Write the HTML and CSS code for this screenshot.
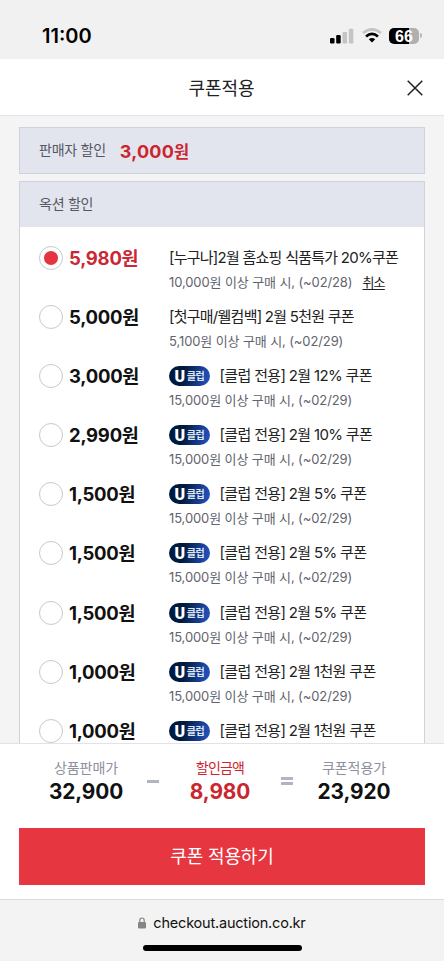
FILE: index.html
```html
<!DOCTYPE html>
<html lang="ko">
<head>
<meta charset="utf-8">
<meta name="viewport" content="width=device-width, initial-scale=1">
<title>쿠폰적용</title>
<link rel="stylesheet" href="styles.css">
</head>
<body>
<div class="screen">
  <div class="status">
    <span class="time">11:00</span>
    <div class="indicators">
      <svg class="signal" width="24" height="16" viewBox="0 0 24 16"><rect x="0" y="10" width="4.5" height="5.5" rx="1.2"/><rect x="6.2" y="7" width="4.5" height="8.5" rx="1.2"/><g fill="#c4c4c4"><rect x="12.5" y="4" width="4.5" height="11.5" rx="1.2"/><rect x="18.8" y="0.8" width="4.5" height="14.7" rx="1.2"/></g></svg>
      <svg class="wifi" width="20" height="15" viewBox="0 0 20 15"><path d="M1 5Q10-2.4 19 5" fill="none" stroke="#c4c4c4" stroke-width="2.7"/><path d="M4 8.4Q10 3.2 16 8.4" fill="none" stroke="#000" stroke-width="2.7"/><path d="M6.8 11.2Q10 8.6 13.2 11.2L10 14.5Z"/></svg>
      <div class="battery"><span class="level">66</span><span class="cap"></span></div>
    </div>
  </div>
  <header class="header">
    <h1>쿠폰적용</h1>
    <svg class="close" width="16" height="16" viewBox="0 0 16 16"><path d="M.7.7 15.3 15.3M15.3.7.7 15.3" fill="none" stroke="#222" stroke-width="1.5"/></svg>
  </header>
  <main class="content">
    <section class="seller"><span class="label">판매자 할인</span><strong>3,000<span class="won">원</span></strong></section>
    <section class="auction">
      <h2 class="label">옥션 할인</h2>
      <ul class="coupons">
        <li class="coupon selected"><i class="radio"></i><b class="amount">5,980원</b><div class="info"><p class="name first">[누구나]2월 홈쇼핑 식품특가 20%쿠폰</p><p class="cond">10,000원 이상 구매 시, (~02/28)<a class="cancel">취소</a></p></div></li>
        <li class="coupon"><i class="radio"></i><b class="amount">5,000원</b><div class="info"><p class="name second">[첫구매/웰컴백] 2월 5천원 쿠폰</p><p class="cond">5,100원 이상 구매 시, (~02/29)</p></div></li>
        <li class="coupon"><i class="radio"></i><b class="amount">3,000원</b><div class="info"><p class="name"><span class="club"><b>U</b>클럽</span>[클럽 전용] 2월 12% 쿠폰</p><p class="cond">15,000원 이상 구매 시, (~02/29)</p></div></li>
        <li class="coupon"><i class="radio"></i><b class="amount">2,990원</b><div class="info"><p class="name"><span class="club"><b>U</b>클럽</span>[클럽 전용] 2월 10% 쿠폰</p><p class="cond">15,000원 이상 구매 시, (~02/29)</p></div></li>
        <li class="coupon"><i class="radio"></i><b class="amount">1,500원</b><div class="info"><p class="name"><span class="club"><b>U</b>클럽</span>[클럽 전용] 2월 5% 쿠폰</p><p class="cond">15,000원 이상 구매 시, (~02/29)</p></div></li>
        <li class="coupon"><i class="radio"></i><b class="amount">1,500원</b><div class="info"><p class="name"><span class="club"><b>U</b>클럽</span>[클럽 전용] 2월 5% 쿠폰</p><p class="cond">15,000원 이상 구매 시, (~02/29)</p></div></li>
        <li class="coupon"><i class="radio"></i><b class="amount">1,500원</b><div class="info"><p class="name"><span class="club"><b>U</b>클럽</span>[클럽 전용] 2월 5% 쿠폰</p><p class="cond">15,000원 이상 구매 시, (~02/29)</p></div></li>
        <li class="coupon"><i class="radio"></i><b class="amount">1,000원</b><div class="info"><p class="name"><span class="club"><b>U</b>클럽</span>[클럽 전용] 2월 1천원 쿠폰</p><p class="cond">15,000원 이상 구매 시, (~02/29)</p></div></li>
        <li class="coupon"><i class="radio"></i><b class="amount">1,000원</b><div class="info"><p class="name"><span class="club"><b>U</b>클럽</span>[클럽 전용] 2월 1천원 쿠폰</p></div></li>
      </ul>
    </section>
  </main>
  <footer class="summary">
    <div class="totals">
      <div class="total"><span>상품판매가</span><b>32,900</b></div>
      <i class="minus"></i>
      <div class="total discount"><span>할인금액</span><b>8,980</b></div>
      <i class="equals"></i>
      <div class="total"><span>쿠폰적용가</span><b>23,920</b></div>
    </div>
    <button class="apply">쿠폰 적용하기</button>
  </footer>
  <div class="browser">
    <div class="address"><svg width="8" height="12" viewBox="0 0 8 12"><path d="M1.8 6V3.2a2.2 2.2 0 0 1 4.4 0V6" fill="none" stroke="#858585" stroke-width="1.2"/><rect y="5" width="8" height="6.5" rx="1.2" fill="#858585"/></svg><span>checkout.auction.co.kr</span></div>
    <div class="home"></div>
  </div>
</div>
</body>
</html>
```

FILE: styles.css
```css
* { box-sizing: border-box; margin: 0; padding: 0; }
body { font-family: Inter, "Noto Sans CJK KR", sans-serif; color: #222; background: #fff; }
i { font-style: normal; }
.screen { width: 444px; height: 961px; display: flex; flex-direction: column; overflow: hidden; white-space: nowrap; }

.status { flex: none; height: 59px; background: #f1f1f1; display: flex; justify-content: space-between; align-items: center; padding: 12px 22px 0 42px; }
.time { font-size: 20px; font-weight: 600; color: #000; }
.indicators { display: flex; align-items: center; }
.wifi { margin: 0 7px 0 8px; }
.battery { display: flex; align-items: center; gap: 1px; }
.level { width: 30px; height: 16px; border-radius: 5px; background: linear-gradient(90deg, #000 66%, #b0b0b0 66%); color: #fff; font-family: "Liberation Sans", sans-serif; font-size: 16px; font-weight: 700; line-height: 17px; text-align: center; }
.cap { width: 2px; height: 5px; border-radius: 0 2px 2px 0; background: #b8b8b8; }

.header { flex: none; height: 57px; border-bottom: 1px solid #e3e4ea; display: grid; grid-template-columns: 1fr auto 1fr; align-items: center; padding: 1px 21px 0 20px; }
.header h1 { grid-column: 2; font-size: 18px; font-weight: 400; letter-spacing: -.1px; line-height: 24px; padding-top: 2px; }
.close { justify-self: end; }

.content { flex: none; height: 627px; background: #f4f4f5; padding: 11px 19px 0; overflow: hidden; }
.label { font-size: 14px; font-weight: 400; color: #555762; letter-spacing: -.25px; }
.seller { height: 47px; border: 1px solid #cfd1dc; background: #e3e5ee; display: flex; align-items: center; padding-left: 19px; gap: 14px; }
.seller .label { line-height: 20px; padding-bottom: 2px; }
.seller strong { font-size: 18px; font-weight: 650; color: #cb252e; line-height: 24px; height: 22px; letter-spacing: .2px; }
.seller .won { font-size: 16.5px; }
.auction { margin-top: 7px; border: 1px solid #cfd1dc; background: #fff; }
.auction h2 { height: 45px; line-height: 44px; background: #e3e5ee; padding-left: 19px; }
.coupons { list-style: none; padding-top: 19px; }
.coupon { height: 59.1px; display: flex; align-items: flex-start; padding-left: 19px; }
.radio { flex: none; width: 24px; height: 24px; border: 1px solid #c8c9cc; border-radius: 50%; display: grid; place-items: center; }
.selected .radio::after { content: ""; width: 14px; height: 14px; border-radius: 50%; background: #e5343f; }
.amount { width: 100px; margin-left: 6px; height: 24px; line-height: 24px; font-size: 18.5px; font-weight: 650; letter-spacing: -.25px; color: #111; }
.selected .amount { color: #ca2934; }
.name { display: flex; align-items: center; height: 24px; line-height: 24px; font-size: 15px; letter-spacing: -.66px; color: #222; }
.first, .second { letter-spacing: -.75px; }
.cond { height: 24px; line-height: 24px; font-size: 13px; letter-spacing: -.11px; color: #62646d; }
.cancel { margin-left: 10px; color: #222; letter-spacing: -.8px; text-decoration: underline; text-underline-offset: 2px; }
.club { width: 41px; height: 20px; margin-right: 9.5px; border-radius: 10px; background: linear-gradient(100deg, #001a3d 35%, #2855c8); display: flex; align-items: center; justify-content: center; gap: 2px; color: #dce8fa; font-size: 10px; font-weight: 700; letter-spacing: -.4px; line-height: 18px; }
.club b { font-family: Roboto, sans-serif; font-size: 16px; line-height: 18px; padding-top: 2px; color: #fff; }

.summary { flex: none; height: 156px; border-top: 1px solid #e1e2ea; padding: 13px 19px 0; }
.totals { height: 71px; display: grid; grid-template-columns: 134px 0 134px 0 134px; }
.total { text-align: center; }
.total span { display: block; height: 21px; line-height: 21px; font-size: 14px; color: #8d909d; letter-spacing: -.1px; }
.total b { display: block; font-size: 20.8px; font-weight: 650; line-height: 27px; color: #111; letter-spacing: -.1px; }
.discount span, .discount b { color: #cb252e; }
.discount span { letter-spacing: -.8px; }
.minus, .equals { justify-self: center; width: 12px; margin-top: 23px; border-top: 3px solid #b1b5c1; }
.equals { height: 8px; margin-top: 20px; border-bottom: 3px solid #b1b5c1; }
.apply { display: block; width: 406px; height: 57px; border: 0; background: #e63640; color: #fff; font: 400 18px/24px Inter, "Noto Sans CJK KR", sans-serif; padding-top: 1px; letter-spacing: -.15px; }

.browser { flex: 1; border-top: 1px solid #dcdcdc; background: #f3f3f3; }
.address { display: flex; justify-content: center; align-items: center; gap: 7px; height: 45px; font-size: 14.5px; letter-spacing: -.2px; color: #111; }
.home { width: 159px; height: 6px; margin: 0 auto; border-radius: 3px; background: #000; }
```
